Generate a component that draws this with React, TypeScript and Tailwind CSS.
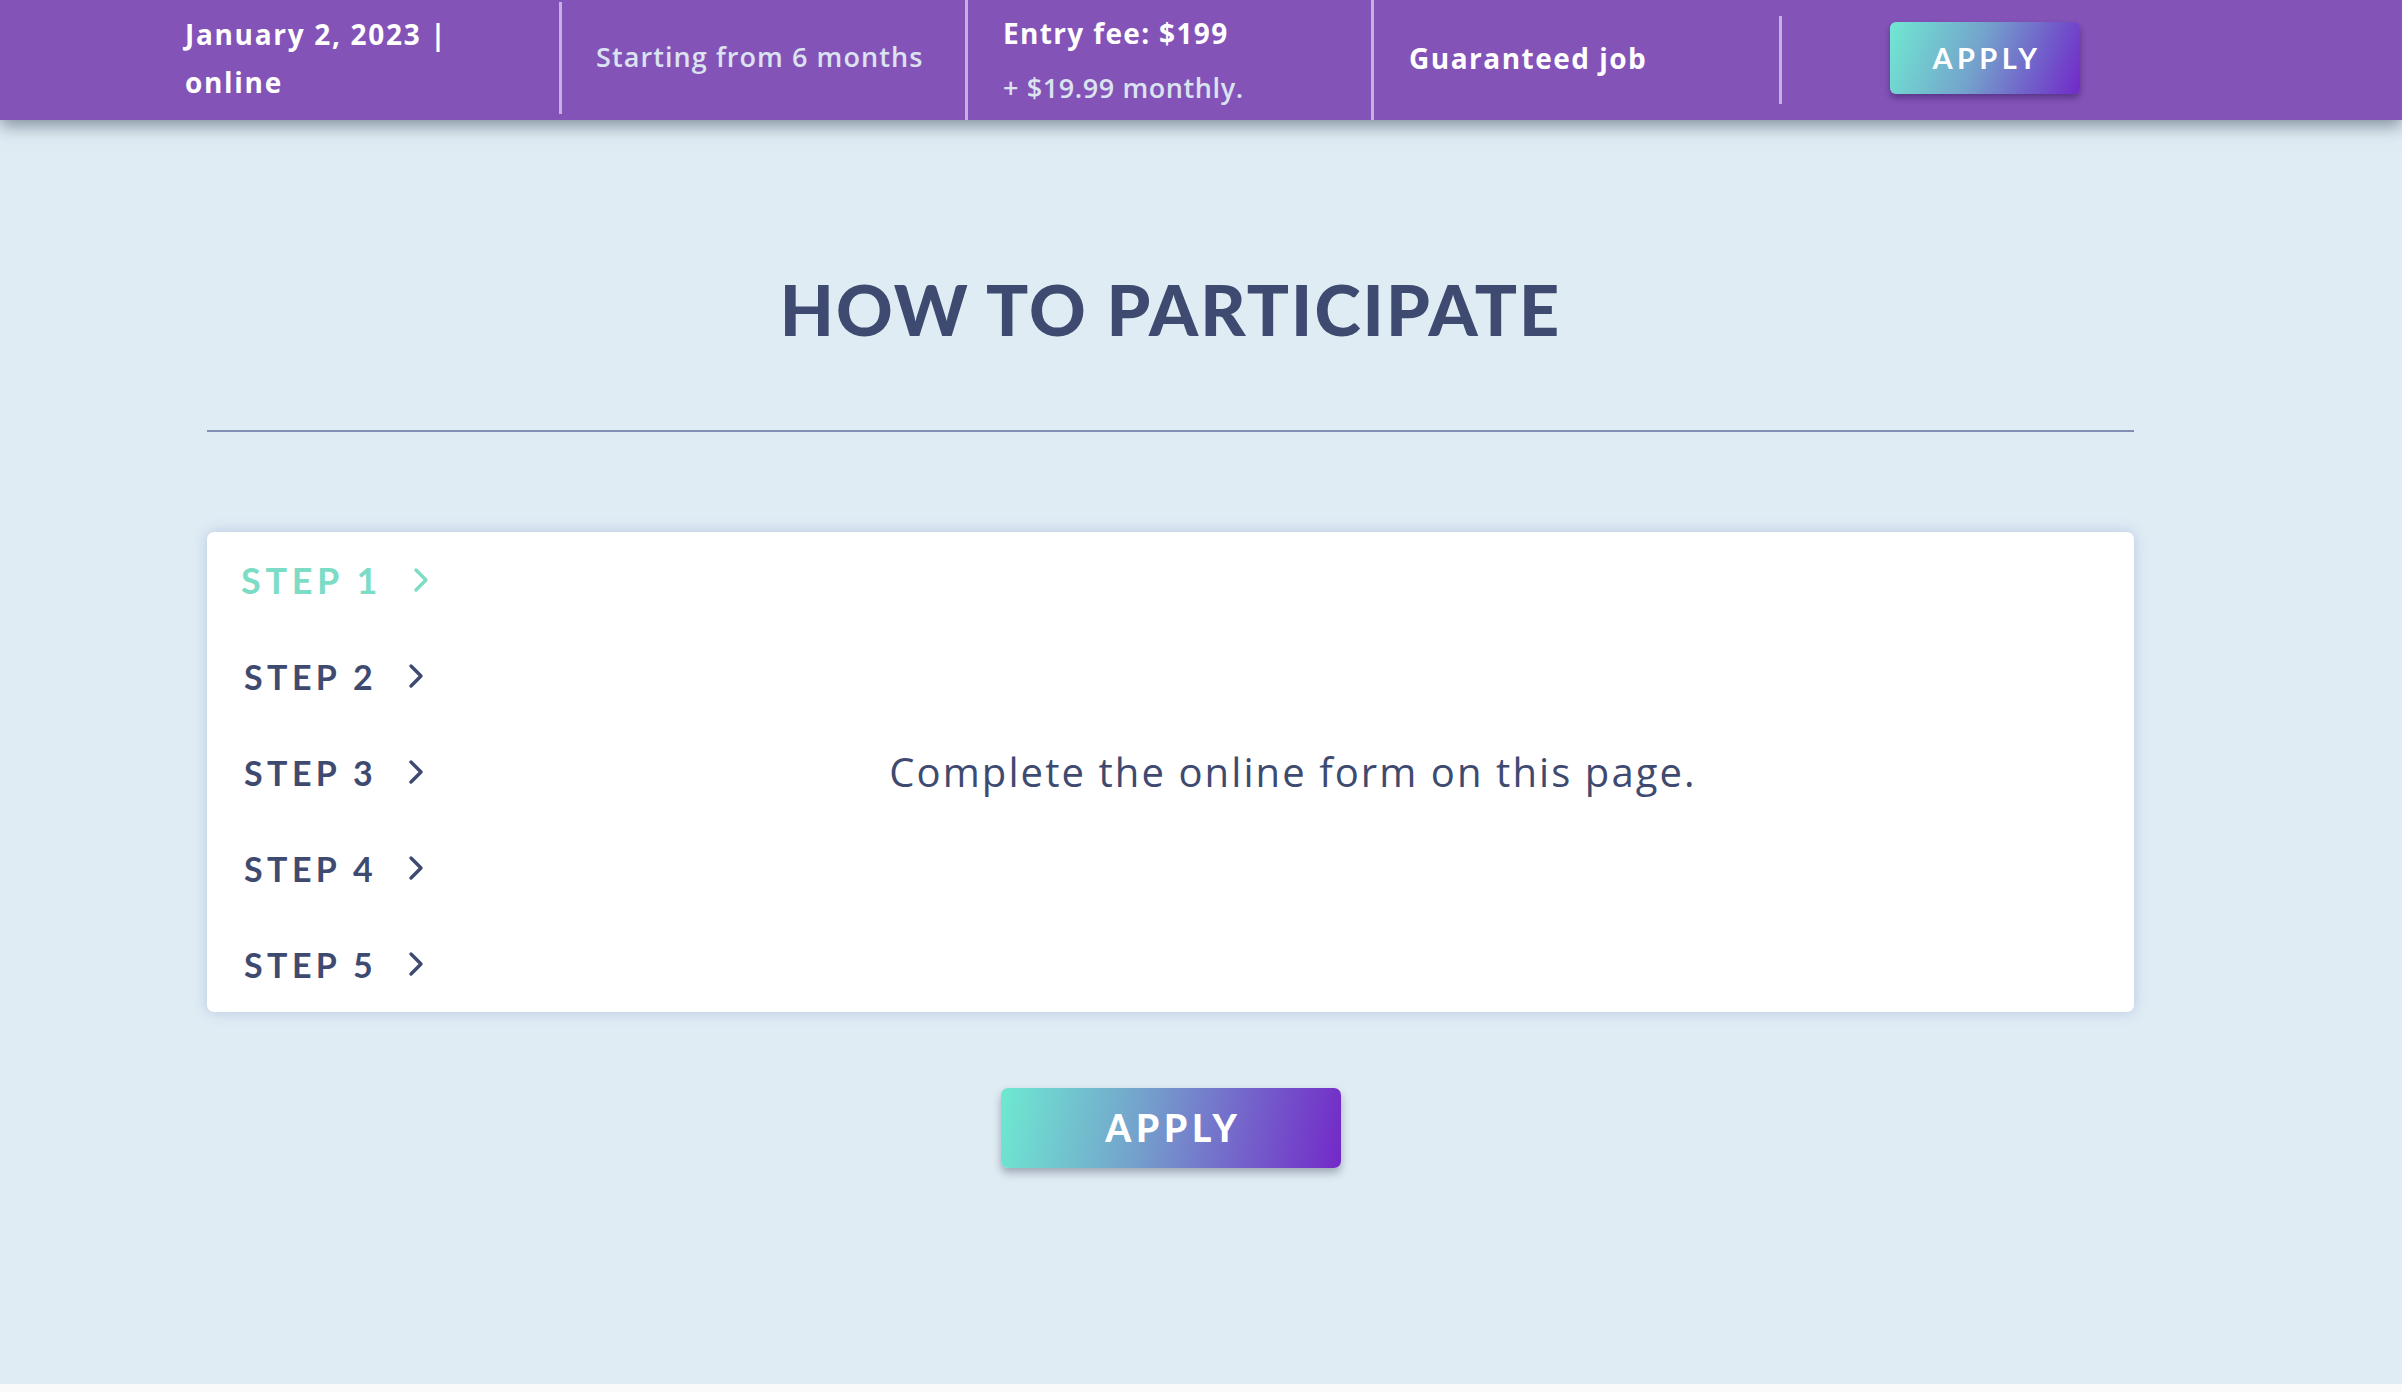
const steps = ['STEP 1', 'STEP 2', 'STEP 3', 'STEP 4', 'STEP 5'];

function Chevron() {
  return (
    <svg viewBox="0 0 16 26" className="ml-[31px] h-[26px] w-[16px]" fill="none" stroke="currentColor" strokeWidth={3.4} strokeLinecap="round" strokeLinejoin="round">
      <path d="M3 3 L13 13 L3 23" />
    </svg>
  );
}

function ApplyButton({ big }: { big?: boolean }) {
  if (big) {
    return (
      <button className="flex h-[80px] w-[340px] items-center justify-center rounded-[7px] bg-[linear-gradient(100deg,#6ee9d1_0%,#74a3cc_40%,#7465cb_70%,#7329c8_100%)] pl-[6px] font-['Lato',sans-serif] text-[37px] font-black tracking-[0.13em] text-white shadow-[0_5px_8px_rgba(40,45,70,0.35)]">
        APPLY
      </button>
    );
  }
  return (
    <button className="mb-[4px] flex h-[72px] w-[190px] items-center justify-center rounded-[6px] bg-[linear-gradient(110deg,#70e8d2_0%,#74a4cc_45%,#7160ca_75%,#7129c9_100%)] pl-[4px] font-['Lato',sans-serif] text-[29px] font-bold tracking-[0.15em] text-white shadow-[0_4px_6px_rgba(40,20,80,0.45)]">
      APPLY
    </button>
  );
}

export default function App() {
  return (
    <div className="min-h-screen bg-[#fafafa] font-['Lato',sans-serif]">
      <div className="h-[1384px] bg-[#e0ecf4]">
        <header className="relative z-10 h-[120px] bg-[#8453b8] font-['Open_Sans',sans-serif] shadow-[0_6px_16px_rgba(40,55,75,0.5)]">
          <div className="ml-[156px] flex h-full w-[2032px]">
            <div className="mt-[2px] flex h-[112px] w-[406px] items-center border-r-[3px] border-[#c6b0e2] pl-[29px]">
              <p className="text-[28px] font-bold leading-[48px] tracking-[0.06em] text-white">
                January 2, 2023 |<br />
                online
              </p>
            </div>
            <div className="flex h-full w-[406px] items-center border-r-[3px] border-[#c6b0e2] pb-[5px] pl-[34px]">
              <p className="text-[27px] font-semibold tracking-[0.04em] text-[#dbe3f0]">Starting from 6 months</p>
            </div>
            <div className="flex h-full w-[406px] flex-col justify-center border-r-[3px] border-[#c6b0e2] pl-[35px]">
              <p className="text-[28px] font-bold leading-[40px] tracking-[0.048em] text-white">Entry fee: $199</p>
              <p className="mt-[15px] text-[27px] font-semibold leading-[40px] tracking-[0.022em] text-[#dbe3f0]">+ $19.99 monthly.</p>
            </div>
            <div className="my-auto flex h-[88px] w-[408px] items-center border-r-[3px] border-[#c6b0e2] pb-[5px] pl-[35px]">
              <p className="text-[28px] font-bold tracking-[0.053em] text-white">Guaranteed job</p>
            </div>
            <div className="flex h-full w-[406px] items-center justify-center">
              <ApplyButton />
            </div>
          </div>
        </header>

        <main className="ml-[207px] flex w-[1927px] flex-col items-center">
          <h2 className="mt-[154px] text-[70px] font-black leading-[70px] tracking-[0.03em] text-[#3e4a6f]">
            HOW TO PARTICIPATE
          </h2>
          <div className="mt-[86px] h-[2px] w-full bg-[#8190b4]" />

          <div className="mt-[100px] flex h-[480px] w-full rounded-[7px] bg-white shadow-[0_0_14px_rgba(130,155,205,0.45)]">
            <ul className="w-[245px] shrink-0">
              {steps.map((s, i) => (
                <li
                  key={s}
                  className={
                    i === 0
                      ? 'flex h-[96px] items-center pl-[34px] text-[36px] font-bold tracking-[0.13em] text-[#7cdcc5]'
                      : 'flex h-[96px] items-center pl-[37px] text-[34px] font-bold tracking-[0.13em] text-[#3f4a70]'
                  }
                >
                  <span>{s}</span>
                  <Chevron />
                </li>
              ))}
            </ul>
            <div className="flex flex-1 items-center justify-center">
              <p className="font-['Open_Sans',sans-serif] text-[40px] tracking-[0.052em] text-[#3f4a70]">
                Complete the online form on this page.
              </p>
            </div>
          </div>

          <div className="mt-[76px]">
            <ApplyButton big />
          </div>
        </main>
      </div>
    </div>
  );
}
